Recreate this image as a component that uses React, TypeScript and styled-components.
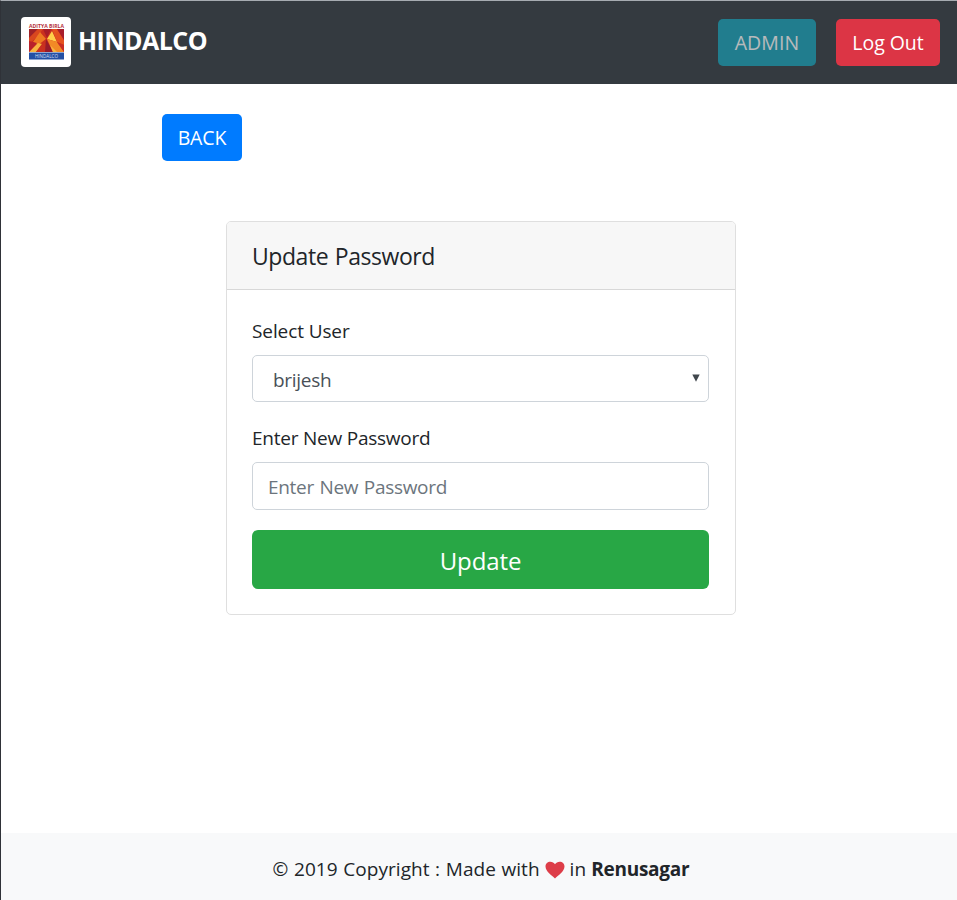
import React from 'react';
import styled, { createGlobalStyle } from 'styled-components';

const GlobalStyle = createGlobalStyle`
  *, *::before, *::after { box-sizing: border-box; }
  body { margin: 0; background: #fff; }
  body, button, input, select {
    font-family: "Segoe UI", "Open Sans", "Noto Sans", sans-serif;
    font-size: 19px;
    line-height: 30px;
    color: #212529;
  }
`;

const Page = styled.div`
  display: flex;
  flex-direction: column;
  height: 900px;
  overflow: hidden;
  border-top: 1px solid #a6abb1;
  border-left: 1px solid #2f3238;
`;

const Navbar = styled.header`
  display: flex;
  align-items: center;
  height: 83px;
  padding: 0 17px 0 20px;
  background: #343a40;
`;

const Brand = styled.a`
  display: flex;
  align-items: center;
  gap: 7px;
  margin: -2px auto 0 0;
  color: #fff;
`;

const BrandName = styled.span`
  font-size: 25px;
  font-weight: 700;
  letter-spacing: -0.55px;
  margin-top: -4px;
`;

const LogoTile = styled.svg`
  display: block;
  width: 50px;
  height: 50px;
`;

const NavActions = styled.div`
  display: flex;
  gap: 20px;
`;

const palette = {
  info: '#17a2b8',
  danger: '#dc3545',
  primary: '#007bff',
};

const Button = styled.button<{ $tone: keyof typeof palette; $width: number; $spacing: number }>`
  width: ${(p) => p.$width}px;
  height: 47px;
  padding: 1px 0 0;
  border: 0;
  border-radius: 5px;
  background: ${(p) => palette[p.$tone]};
  color: #fff;
  font-size: 19.5px;
  letter-spacing: ${(p) => p.$spacing}px;
  white-space: nowrap;
  &:disabled { opacity: 0.65; }
`;

const Main = styled.main`
  flex: 1;
  padding: 30px 0 0 161px;
`;

const Card = styled.section`
  width: 510px;
  margin: 60px 0 0 64px;
  border: 1px solid #dfdfdf;
  border-radius: 5px;
  overflow: hidden;
`;

const CardHeader = styled.h1`
  margin: 0;
  height: 68px;
  padding: 0 25px;
  border-bottom: 1px solid #d8d8d8;
  background: #f7f7f7;
  font-size: 23px;
  font-weight: 400;
  line-height: 69px;
  letter-spacing: -0.45px;
  word-spacing: 1.2px;
`;

const Form = styled.form`
  display: flex;
  flex-direction: column;
  padding: 25px 26px 25px 25px;
`;

const Label = styled.label<{ $spacing: number }>`
  height: 30px;
  margin-bottom: 10px;
  line-height: 33px;
  letter-spacing: ${(p) => p.$spacing}px;
`;

const SelectBox = styled.div`
  display: grid;
  grid-template-columns: 1fr 18px;
  align-items: center;
  height: 47px;
  margin-bottom: 20px;
  border: 1px solid #ced4da;
  border-radius: 5px;
`;

const Select = styled.select`
  grid-area: 1 / 1 / 2 / 3;
  appearance: none;
  height: 45px;
  padding: 3px 20px 0;
  border: 0;
  background: transparent;
  color: #495057;
  letter-spacing: -0.3px;
`;

const Arrow = styled.svg`
  grid-area: 1 / 2 / 2 / 3;
  width: 8px;
  height: 8px;
  margin: -1px 0 0 2px;
  pointer-events: none;
`;

const Input = styled.input`
  height: 48px;
  margin-bottom: 20px;
  padding: 2px 15px 0;
  border: 1px solid #ced4da;
  border-radius: 5px;
  background: #fff;
  letter-spacing: -0.3px;
  word-spacing: 0.9px;
  &::placeholder { color: #6c757d; opacity: 1; }
`;

const Submit = styled.button`
  height: 59px;
  padding: 3px 0 0;
  border: 0;
  border-radius: 6px;
  background: #28a745;
  color: #fff;
  font-size: 24px;
  letter-spacing: -0.1px;
`;

const Footer = styled.footer`
  display: flex;
  justify-content: center;
  align-items: center;
  height: 67px;
  padding: 4px 0 0 4px;
  background: #f8f9fa;
`;

const FooterText = styled.span`
  letter-spacing: 0.05px;
  word-spacing: 0.6px;
`;

const FooterPlace = styled.strong`
  margin-left: 5px;
  font-weight: 700;
  letter-spacing: -0.25px;
`;

const Heart = styled.svg`
  width: 20px;
  height: 18px;
  margin: 3px 5px 0;
`;

function Logo() {
  return (
    <LogoTile viewBox="0 0 50 50" aria-hidden="true">
      <rect width="50" height="50" rx="4" fill="#fff" />
      <text x="8" y="11" textLength="35" lengthAdjust="spacingAndGlyphs" fontFamily="Open Sans, sans-serif" fontSize="5.5" fontWeight="700" fill="#b5323b">ADITYA BIRLA</text>
      <rect x="8" y="12" width="35" height="23" fill="#c9301f" />
      <path d="M8 12h9l-9 9z" fill="#9f2228" />
      <path d="M17 12h5l-5 7-9 8v-6z" fill="#d9471f" />
      <path d="M22 12h8l-4 9z" fill="#a81d28" />
      <path d="M19 15l6 7-8 6-5-3z" fill="#ee7a22" />
      <path d="M31 14l5 11-10-3z" fill="#ffd04a" />
      <path d="M31 12h5l7 11v5l-7-3z" fill="#e5521f" />
      <path d="M36 12h7v11z" fill="#a81d2b" />
      <path d="M8 35l9-9 4 1-6 8z" fill="#f7b540" />
      <path d="M8 24l8 2-8 9z" fill="#b9222b" />
      <path d="M25 22l-10 13h9z" fill="#c9301f" />
      <path d="M25 22l7 13h-8z" fill="#981b2a" />
      <path d="M26 22l10 3 7 10H32z" fill="#f28a26" />
      <path d="M36 25l7 3v7z" fill="#c92d24" />
      <path d="M29 28l7 7h-4z" fill="#f7b540" />
      <rect x="8" y="35.500" width="35" height="7" fill="#2450a4" />
      <text x="14" y="41" textLength="23" lengthAdjust="spacingAndGlyphs" fontFamily="Open Sans, sans-serif" fontSize="5" fill="#d4def2">HINDALCO</text>
    </LogoTile>
  );
}

export default function App() {
  return (
    <>
      <GlobalStyle />
      <Page>
        <Navbar>
          <Brand>
            <Logo />
            <BrandName>HINDALCO</BrandName>
          </Brand>
          <NavActions>
            <Button $tone="info" $width={98} $spacing={0.1} disabled>ADMIN</Button>
            <Button $tone="danger" $width={104} $spacing={-0.05}>Log Out</Button>
          </NavActions>
        </Navbar>
        <Main>
          <Button $tone="primary" $width={80} $spacing={-0.1}>BACK</Button>
          <Card>
            <CardHeader>Update Password</CardHeader>
            <Form>
              <Label $spacing={-0.1} htmlFor="user">Select User</Label>
              <SelectBox>
                <Select id="user" defaultValue="brijesh">
                  <option>brijesh</option>
                </Select>
                <Arrow viewBox="0 0 8 8"><path d="M0.3 0.5h7.4L4 7.8z" fill="#41474d" /></Arrow>
              </SelectBox>
              <Label $spacing={-0.23} htmlFor="password">Enter New Password</Label>
              <Input id="password" type="password" placeholder="Enter New Password" />
              <Submit type="button">Update</Submit>
            </Form>
          </Card>
        </Main>
        <Footer>
          <FooterText>© 2019 Copyright : Made with</FooterText>
          <Heart viewBox="0 0 20 18">
            <path d="M10 17.5C7 14.5 .5 10.5 .5 5.5.5 2.5 2.7.7 5.3.7 7.3.7 9 1.7 10 3.3 11 1.7 12.7.7 14.7.7c2.6 0 4.8 1.8 4.8 4.8 0 5-6.500 9-9.500 12z" fill="#dd3d48" />
          </Heart>
          <FooterText>in</FooterText>
          <FooterPlace>Renusagar</FooterPlace>
        </Footer>
      </Page>
    </>
  );
}
